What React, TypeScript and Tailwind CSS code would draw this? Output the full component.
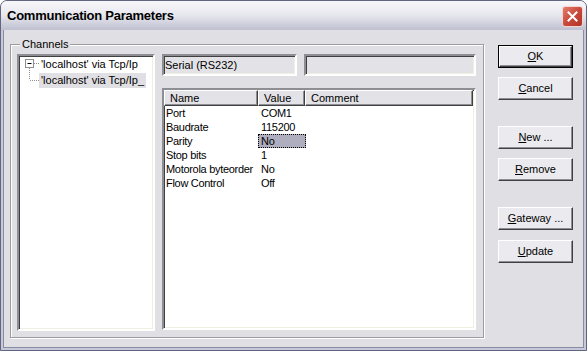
import React from "react";

const font = { fontFamily: '"Liberation Sans", Arial, sans-serif' };

const sunken =
  "border-2 border-t-[#8e8e95] border-l-[#8e8e95] border-b-[#ffffff] border-r-[#ffffff] shadow-[inset_1px_1px_0_#404040,inset_-1px_-1px_0_#f1efe2]";

function DlgButton({
  label,
  hot,
  isDefault,
  className = "",
}: {
  label: string;
  hot: number;
  isDefault?: boolean;
  className?: string;
}) {
  const before = label.slice(0, hot);
  const key = label.slice(hot, hot + 1);
  const after = label.slice(hot + 1);
  return (
    <div
      className={`w-[75px] h-[23px] ${
        isDefault ? "border border-black" : ""
      } ${className}`}
    >
      <div className="w-full h-full bg-[#ebeaee] border border-t-white border-l-white border-b-[#404040] border-r-[#404040] shadow-[inset_-1px_-1px_0_#8e8e95] flex items-center justify-center text-[11px] text-black">
        <span>
          {before}
          <span className="underline underline-offset-[1px]">{key}</span>
          {after}
        </span>
      </div>
    </div>
  );
}

function TreeGutter({ first }: { first?: boolean }) {
  if (first) {
    return (
      <svg width="20" height="16" className="shrink-0">
        <rect x="6.5" y="3.5" width="8" height="8" fill="#fff" stroke="#8e8e95" />
        <line x1="8.5" y1="7.5" x2="12.5" y2="7.5" stroke="#000" />
        <line x1="15" y1="7.5" x2="20" y2="7.5" stroke="#8e8e95" strokeDasharray="1 1" />
        <line x1="10.5" y1="12" x2="10.5" y2="16" stroke="#8e8e95" strokeDasharray="1 1" />
      </svg>
    );
  }
  return (
    <svg width="20" height="16" className="shrink-0">
      <line x1="10.5" y1="0" x2="10.5" y2="8" stroke="#8e8e95" strokeDasharray="1 1" />
      <line x1="11" y1="8.5" x2="20" y2="8.5" stroke="#8e8e95" strokeDasharray="1 1" />
    </svg>
  );
}

const rows: { name: string; value: string; selected?: boolean }[] = [
  { name: "Port", value: "COM1" },
  { name: "Baudrate", value: "115200" },
  { name: "Parity", value: "No", selected: true },
  { name: "Stop bits", value: "1" },
  { name: "Motorola byteorder", value: "No" },
  { name: "Flow Control", value: "Off" },
];

function HeaderCell({ label, w }: { label: string; w: string }) {
  return (
    <div
      className={`${w} h-full shrink-0 bg-[#e3e2e6] border border-t-white border-l-white border-b-[#404040] border-r-[#404040] shadow-[inset_-1px_-1px_0_#8e8e95] flex items-center pl-[5px] text-[11px]`}
    >
      {label}
    </div>
  );
}

export default function App() {
  return (
    <div className="w-[587px] h-[351px] bg-white" style={font}>
      <div className="w-full h-full flex flex-col rounded-t-[7px] overflow-hidden border border-[#62657f] bg-[#c8c9d8]">
        {/* title bar */}
        <div className="h-[29px] shrink-0 flex items-center justify-between pl-[6px] pr-[3px] bg-gradient-to-b from-[#f8f8fb] via-[#e6e6ee] to-[#bfc0d0]">
          <span className="text-[13px] font-bold text-black tracking-[-0.25px]">
            Communication Parameters
          </span>
          <div className="w-[21px] h-[21px] rounded-[3px] border border-[#f4d6d0] bg-gradient-to-br from-[#e47d6d] via-[#c94a3c] to-[#b23325] flex items-center justify-center mt-[2px]">
            <svg width="11" height="11" viewBox="0 0 11 11">
              <path d="M1.5 1.5 L9.5 9.5 M9.5 1.5 L1.5 9.5" stroke="#fff" strokeWidth="2" strokeLinecap="square" />
            </svg>
          </div>
        </div>

        {/* client */}
        <div className="flex-1 mx-[2px] mb-[2px] border-x border-b border-[#8a8ca4] bg-[#e0dfe3] flex items-start text-black">
          {/* group box */}
          <div className="relative ml-[6px] mt-[14px] w-[474px] h-[294px] border border-[#9d9da1] shadow-[inset_1px_1px_0_#fff,1px_1px_0_#fff] flex pl-[6px] pt-[9px]">
            <span className="absolute left-[9px] top-[-8px] px-[2px] bg-[#e0dfe3] text-[11px] leading-[14px]">
              Channels
            </span>

            {/* tree */}
            <div className={`w-[138px] h-[277px] shrink-0 bg-white ${sunken} flex flex-col text-[11px]`}>
              <div className="h-[16px] flex items-center">
                <TreeGutter first />
                <span className="px-[2px] leading-[14px] whitespace-nowrap">'localhost' via Tcp/Ip</span>
              </div>
              <div className="h-[16px] flex items-center">
                <TreeGutter />
                <span className="px-[2px] leading-[15px] bg-[#e0dfe3] whitespace-nowrap">'localhost' via Tcp/Ip_</span>
              </div>
            </div>

            {/* right side */}
            <div className="ml-[7px] w-[314px] flex flex-col">
              <div className="flex gap-[7px] h-[22px]">
                <div className={`w-[135px] h-full ${sunken} bg-[#e3e2e6] flex items-center pl-[1px] text-[11px]`}>
                  Serial (RS232)
                </div>
                <div className={`flex-1 h-full ${sunken} bg-[#e3e2e6]`} />
              </div>

              <div className={`mt-[12px] h-[242px] bg-white ${sunken} flex flex-col text-[11px]`}>
                <div className="h-[16px] flex shrink-0">
                  <HeaderCell label="Name" w="w-[94px]" />
                  <HeaderCell label="Value" w="w-[47px]" />
                  <HeaderCell label="Comment" w="w-[168px]" />
                </div>
                <div className="flex flex-col">
                  {rows.map((r) => (
                    <div key={r.name} className="h-[14px] flex items-center tracking-[-0.3px]">
                      <span className="w-[94px] pl-[2px] shrink-0 whitespace-nowrap">{r.name}</span>
                      <span
                        className={`w-[48px] h-[14px] flex items-center shrink-0 ${
                          r.selected ? "bg-[#aeaebf] border border-dotted border-black pl-[2px]" : "pl-[3px]"
                        }`}
                      >
                        {r.value}
                      </span>
                    </div>
                  ))}
                </div>
              </div>
            </div>
          </div>

          {/* buttons */}
          <div className="ml-[14px] mt-[15px] flex flex-col">
            <DlgButton label="OK" hot={0} isDefault />
            <DlgButton label="Cancel" hot={0} className="mt-[9px]" />
            <DlgButton label="New ..." hot={0} className="mt-[26px]" />
            <DlgButton label="Remove" hot={0} className="mt-[9px]" />
            <DlgButton label="Gateway ..." hot={0} className="mt-[26px]" />
            <DlgButton label="Update" hot={0} className="mt-[10px]" />
          </div>
        </div>
      </div>
    </div>
  );
}
